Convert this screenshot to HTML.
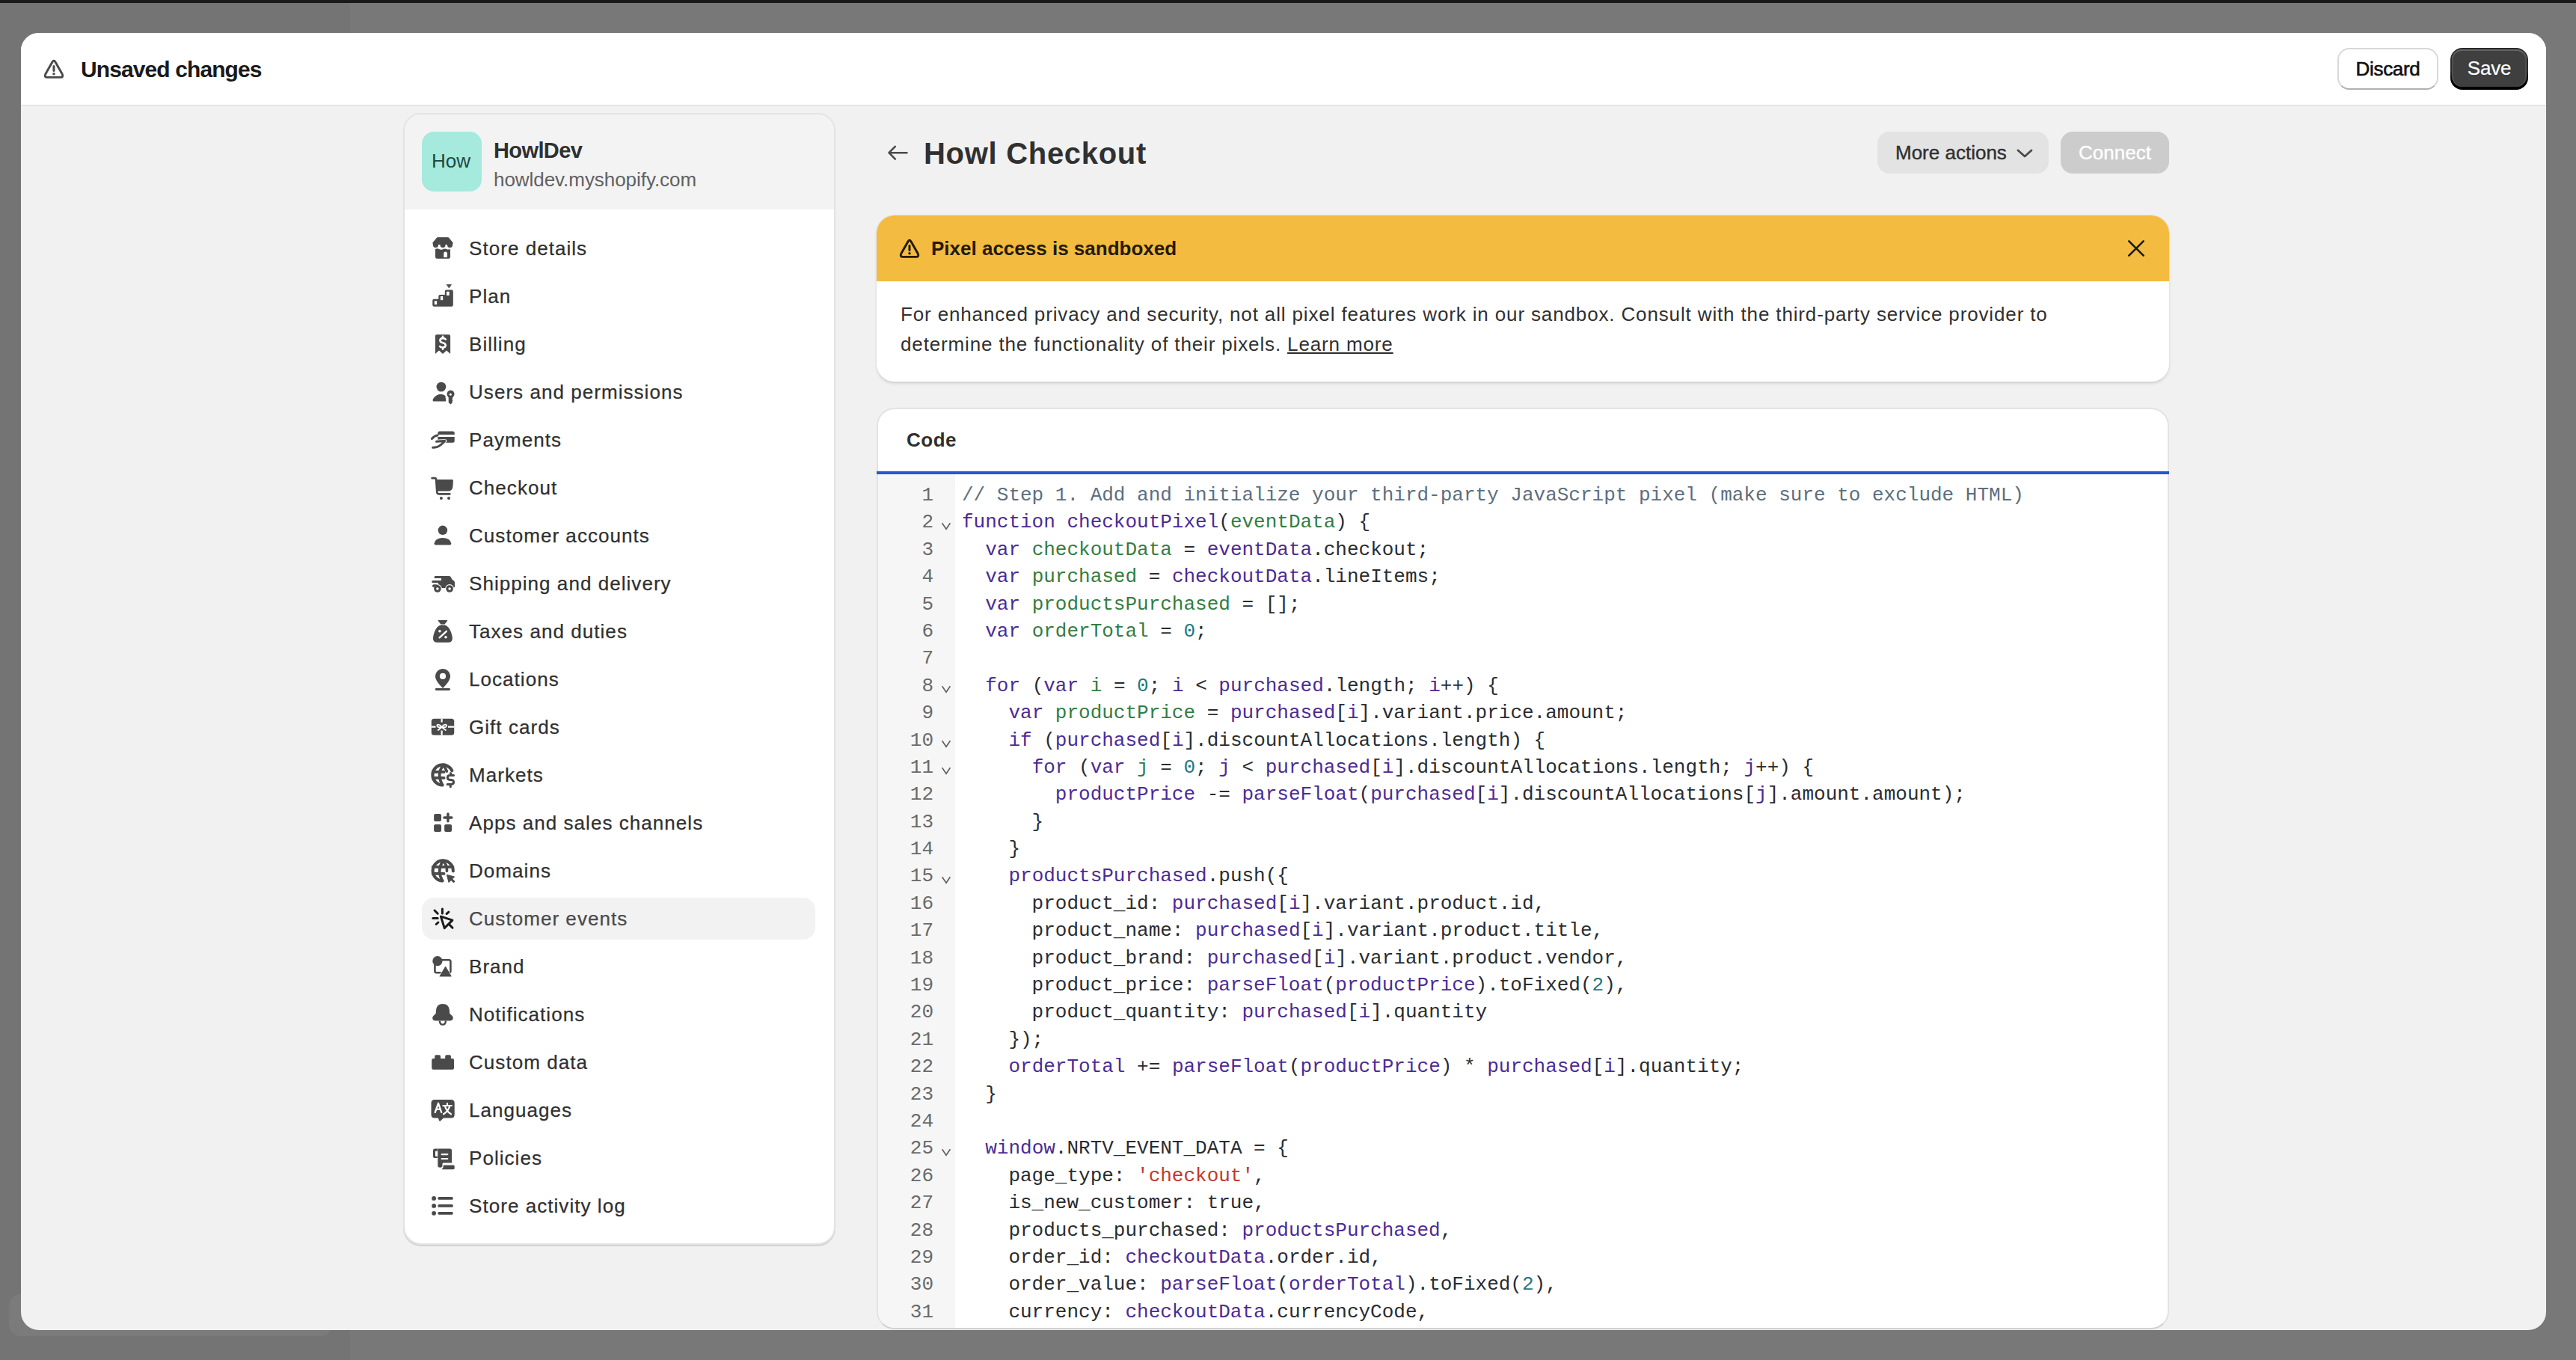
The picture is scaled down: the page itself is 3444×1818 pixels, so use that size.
<!DOCTYPE html>
<html>
<head>
<meta charset="utf-8">
<style>
*{box-sizing:border-box;margin:0;padding:0}
html,body{width:3444px;height:1818px;overflow:hidden}
body{position:relative;background:#787878;font-family:"Liberation Sans",sans-serif;color:#303030}
.abs{position:absolute}
#topbar{left:0;top:0;width:3444px;height:4px;background:#1a1a1a}
#bdl{left:0;top:4px;width:468px;height:1814px;background:#747474}
#ghost{left:12px;top:1730px;width:432px;height:56px;border-radius:16px;background:#7b7b7b}
#modal{left:28px;top:44px;width:3376px;height:1734px;border-radius:24px;background:#f1f1f1;overflow:hidden}
#mhead{left:0;top:0;width:3376px;height:97px;background:#fff;border-bottom:1px solid #e0e0e0;box-shadow:0 1px 0 #eaeaea}
.t{position:absolute;white-space:nowrap}
.btn{position:absolute;border-radius:16px;text-align:center;font-size:26px}
/* sidebar */
#side{left:511px;top:107px;width:578px;height:1513px;border:2px solid #e3e3e3;border-radius:24px;background:#fff;overflow:hidden;box-shadow:0 2px 0 #d4d4d4}
#shead{left:0;top:0;width:100%;height:127px;background:#f3f3f3}
.item{position:absolute;left:23px;width:526px;height:56px;border-radius:16px}
.item .lbl{position:absolute;left:63px;top:0;line-height:56px;font-size:26px;color:#303030;white-space:nowrap;letter-spacing:1.05px;-webkit-text-stroke:0.25px currentColor}
.item svg{position:absolute;left:8px;top:7px;width:40px;height:40px;overflow:visible}
.sel{background:#f2f2f2}
/* main */
#banner{left:1144px;top:244px;width:1728px;height:222px;border-radius:24px;background:#fff;overflow:hidden;box-shadow:0 0 0 1px #e3e3e3, 0 2px 0 #d2d2d2, 0 3px 4px rgba(0,0,0,0.10)}
#bhead{left:0;top:0;width:100%;height:88px;background:#f4bb41}
#card{left:1144px;top:501px;width:1728px;height:1232px;border-radius:24px;background:#fff;overflow:hidden;border:2px solid #e3e3e3;border-bottom-color:#d0d0d0}
#gutter{left:0;top:87px;width:103px;height:1200px;background:#f6f6f6}
.gn{height:36.4px;line-height:36.4px;text-align:right;position:relative;width:74px;color:#6a6a6a}
.fd{position:absolute;left:84px;top:17.5px}
.ln{height:36.4px;line-height:36.4px;white-space:pre}
.mono{font-family:"Liberation Mono",monospace;font-size:26px}
.k,.v{color:#4c2b94}
.d{color:#337d40}
.n{color:#23797d}
.s{color:#c4372c}
.c{color:#5d6e7e}
#code{color:#292c30}
</style>
</head>
<body>
<div id="topbar" class="abs"></div>
<div id="bdl" class="abs"></div>
<div id="ghost" class="abs"></div>

<div id="modal" class="abs">
  <div id="mhead" class="abs">
    <svg class="abs" style="left:29px;top:33px" width="30" height="30" viewBox="0 0 30 30">
      <path d="M12.9 6 Q15 2.6 17.1 6 L26.2 22 Q28.2 26.4 23.8 26.4 H6.2 Q1.8 26.4 3.8 22 Z" fill="none" stroke="#4a4a4a" stroke-width="2.9" stroke-linejoin="round"/>
      <line x1="15" y1="11.6" x2="15" y2="17.4" stroke="#4a4a4a" stroke-width="3" stroke-linecap="round"/>
      <circle cx="15" cy="21.7" r="1.75" fill="#4a4a4a"/>
    </svg>
    <div class="t" style="left:80px;top:29px;font-size:30px;line-height:40px;font-weight:bold;color:#1a1a1a;letter-spacing:-0.9px">Unsaved changes</div>
    <div class="btn" style="left:3097px;top:20px;width:135px;height:56px;background:#fff;border:2px solid #d8d8d8;border-bottom-color:#b0b0b0;line-height:52px;color:#111;letter-spacing:-0.3px;-webkit-text-stroke:0.6px #111">Discard</div>
    <div class="btn" style="left:3248px;top:20px;width:104px;height:56px;background:linear-gradient(#2b2b2b 55%,#000 80%)"><div class="abs" style="left:2px;top:2px;right:2px;bottom:4px;border-radius:14px;background:#3f3f3f;box-shadow:inset 0 2px 0 #646464, inset 2px 0 0 #4f4f4f, inset -2px 0 0 #4f4f4f"></div><div class="abs" style="left:0;top:0;width:104px;line-height:54px;color:#fff;letter-spacing:-0.2px;-webkit-text-stroke:0.2px #fff">Save</div></div>
  </div>

  <!-- sidebar -->
  <div id="side" class="abs">
    <div id="shead" class="abs">
      <div class="abs" style="left:23px;top:23px;width:80px;height:80px;border-radius:16px;background:#a6e9dd"></div>
      <div class="t" style="left:36px;top:42px;font-size:26px;line-height:40px;color:#1d4a42;letter-spacing:0px">How</div>
      <div class="t" style="left:119px;top:28px;font-size:29px;line-height:40px;font-weight:bold;color:#303030;letter-spacing:-0.6px">HowlDev</div>
      <div class="t" style="left:119px;top:67px;font-size:26px;line-height:40px;color:#616161;letter-spacing:-0.05px">howldev.myshopify.com</div>
    </div>
    <div class="item" style="top:151px"><svg viewBox="0 0 40 40">
<path d="M12.5 6.7 H27.5 L33 13.2 V15.5 H7 V13.2 Z" fill="#4a4a4a" stroke="#4a4a4a" stroke-width="1" stroke-linejoin="round"/>
<circle cx="10.5" cy="16.6" r="3.5" fill="#4a4a4a"/><circle cx="20" cy="16.6" r="3.5" fill="#4a4a4a"/><circle cx="29.5" cy="16.6" r="3.5" fill="#4a4a4a"/>
<path d="M10 22 Q12.5 20.6 15 22 Q17.5 23.4 20 22.2 Q22.5 21 25 22 Q27.5 23.2 30 22 V32.5 Q30 34.8 27.7 34.8 H12.3 Q10 34.8 10 32.5 Z" fill="#4a4a4a"/>
<path d="M21.2 33 V27.9 A2.4 2.4 0 0 1 26 27.9 V33 Z" fill="#ffffff"/>
</svg><div class="lbl">Store details</div></div>
<div class="item" style="top:215px"><svg viewBox="0 0 40 40">
<path d="M25 5.3 H31.6 L28.3 10 Z" fill="#4a4a4a" stroke="#4a4a4a" stroke-width="0.6" stroke-linejoin="round"/>
<path d="M6.25 26.7 Q6.25 24.7 8.25 24.7 H14.3 V20.9 Q14.3 18.9 16.3 18.9 H22.8 V14.6 Q22.8 12.6 24.8 12.6 H31.8 Q33.8 12.6 33.8 14.6 V32.7 Q33.8 34.7 31.8 34.7 H8.25 Q6.25 34.7 6.25 32.7 Z" fill="#4a4a4a"/>
<rect x="8.8" y="27.3" width="3.3" height="4.8" fill="#ffffff"/><rect x="16.9" y="21" width="3.3" height="5.2" fill="#ffffff"/><rect x="25" y="14.8" width="3.7" height="5.2" fill="#ffffff"/>
</svg><div class="lbl">Plan</div></div>
<div class="item" style="top:279px"><svg viewBox="0 0 40 40">
<path d="M9.9 10.2 Q9.9 8.2 11.9 8.2 H28.1 Q30.1 8.2 30.1 10.2 V33.9 L25 29.6 L20 33.9 L15 29.6 L9.9 33.9 Z" fill="#4a4a4a"/>
<path d="M23.8 14.6 Q22.8 13.1 20 13.1 Q16.4 13.1 16.4 16.1 Q16.4 18.6 20 19.3 Q23.7 20.1 23.7 22.6 Q23.7 25.5 20 25.5 Q17.1 25.5 16.1 24 M20 10.9 V13 M20 25.5 V27.8" fill="none" stroke="#ffffff" stroke-width="2.6" stroke-linecap="round"/>
</svg><div class="lbl">Billing</div></div>
<div class="item" style="top:343px"><svg viewBox="0 0 40 40">
<circle cx="17.9" cy="14.1" r="6.4" fill="#4a4a4a"/>
<path d="M6.6 32.3 Q6.4 31 7.5 29.6 Q11 24 17.5 24 Q21.3 24 23.6 26.2 V29 Q24.2 29.6 24.2 31 V33.6 H8 Q6.8 33.6 6.6 32.3 Z" fill="#4a4a4a"/>
<circle cx="30.5" cy="23.8" r="5" fill="#4a4a4a"/><circle cx="30.3" cy="24.2" r="1.5" fill="#ffffff"/>
<path d="M27.7 27 H33.2 V29.5 L32.2 30.5 L33.2 31.5 V33 L32.2 34 L33 35.2 L30.3 37.6 L27.7 35 Z" fill="#4a4a4a"/>
</svg><div class="lbl">Users and permissions</div></div>
<div class="item" style="top:407px"><svg viewBox="0 0 40 40">
<path d="M15.8 9.6 H33.2 Q35.7 9.6 35.7 12.1 V14 H13.3 V12.1 Q13.3 9.6 15.8 9.6 Z M13.3 17 H35.7 V22.2 Q35.7 24.7 33.2 24.7 H15.8 Q13.3 24.7 13.3 22.2 Z" fill="#4a4a4a"/>
<path d="M11.2 23.1 Q17 22.1 23.2 22.5" fill="none" stroke="#ffffff" stroke-width="4.4" stroke-linecap="round"/>
<path d="M5.4 19.6 Q9 15.4 12.9 15.1" fill="none" stroke="#4a4a4a" stroke-width="3" stroke-linecap="round"/>
<path d="M11.5 23.2 Q17 22.3 22.8 22.4 Q17.5 28.6 12.5 30.4 Q9.5 31.3 6.7 31.2" fill="none" stroke="#4a4a4a" stroke-width="3" stroke-linecap="round" stroke-linejoin="round"/>
</svg><div class="lbl">Payments</div></div>
<div class="item" style="top:471px"><svg viewBox="0 0 40 40">
<path d="M5.6 8.2 H9.3 Q10.9 8.2 11.1 10 L12.3 27 Q12.5 29.3 14.5 29.3 H29.3" fill="none" stroke="#4a4a4a" stroke-width="2.7" stroke-linecap="round" stroke-linejoin="round"/>
<path d="M10.9 10 H32.6 Q34 10 33.9 11.5 L33.4 19.5 Q32.9 25.5 27 25.5 H12 Z" fill="#4a4a4a"/>
<circle cx="17.9" cy="35" r="2" fill="#4a4a4a"/><circle cx="28" cy="35" r="2" fill="#4a4a4a"/>
</svg><div class="lbl">Checkout</div></div>
<div class="item" style="top:535px"><svg viewBox="0 0 40 40">
<circle cx="19.9" cy="13.8" r="6.25" fill="#4a4a4a"/>
<path d="M8.5 31.4 Q9 28 12 26 Q15.5 24 19.9 24 Q24.3 24 27.8 26 Q30.8 28 31.3 31.4 Q31.5 33.5 29.4 33.5 H10.4 Q8.3 33.5 8.5 31.4 Z" fill="#4a4a4a"/>
</svg><div class="lbl">Customer accounts</div></div>
<div class="item" style="top:599px"><svg viewBox="0 0 40 40">
<path d="M10 11.1 H28.5 Q30.2 11.1 31 12.8 L32 15 Q32.6 16.3 34 16.8 Q36 17.6 36 20 V24.3 Q36 26.9 33.6 26.9 H9.5 Q6.3 26.9 6.3 24 Q6.3 22.5 8 22.5 H14 V20 H6.7 Q5.2 20 5.2 18.5 Q5.2 17 6.7 17 H18 V14.1 H10 Q8.5 14.1 8.5 12.6 Q8.5 11.1 10 11.1 Z" fill="#4a4a4a"/>
<circle cx="12.9" cy="28" r="5.9" fill="#ffffff"/><circle cx="29.1" cy="28" r="5.9" fill="#ffffff"/>
<circle cx="12.9" cy="28" r="4.8" fill="#4a4a4a"/><circle cx="29.1" cy="28" r="4.8" fill="#4a4a4a"/>
<circle cx="12.9" cy="28" r="1.8" fill="#ffffff"/><circle cx="29.1" cy="28" r="1.8" fill="#ffffff"/>
<path d="M7.6 24 H12.5" stroke="#4a4a4a" stroke-width="3" stroke-linecap="round"/>
</svg><div class="lbl">Shipping and delivery</div></div>
<div class="item" style="top:663px"><svg viewBox="0 0 40 40">
<path d="M14.3 6 H25.5 Q26.6 6 26 7 L22.5 11.5 H17.3 L13.8 7 Q13.2 6 14.3 6 Z" fill="#4a4a4a"/>
<path d="M17.5 12.4 H22.3 Q28 13.5 31 22 Q33 28 32.8 31 Q32.5 35.7 27.5 35.7 H12.3 Q7.3 35.7 7 31 Q6.8 28 8.8 22 Q11.8 13.5 17.5 12.4 Z" fill="#4a4a4a"/>
<path d="M15.6 29.4 L24.9 20.8" stroke="#ffffff" stroke-width="2.3" stroke-linecap="round"/>
<circle cx="15.9" cy="20.8" r="1.8" fill="#ffffff"/><circle cx="24" cy="28.7" r="1.8" fill="#ffffff"/>
</svg><div class="lbl">Taxes and duties</div></div>
<div class="item" style="top:727px"><svg viewBox="0 0 40 40">
<path d="M20 32.9 Q9.9 23.5 9.9 17.1 A10.1 10.1 0 0 1 30.1 17.1 Q30.1 23.5 20 32.9 Z" fill="#4a4a4a"/>
<circle cx="20" cy="16.9" r="4.1" fill="#ffffff"/>
<path d="M11.2 34.5 H28.6" stroke="#4a4a4a" stroke-width="2.8" stroke-linecap="round"/>
</svg><div class="lbl">Locations</div></div>
<div class="item" style="top:791px"><svg viewBox="0 0 40 40">
<rect x="4.8" y="9.7" width="30.4" height="22.1" rx="3.5" fill="#4a4a4a"/>
<path d="M18.6 9.7 V14.5 M18.6 25.5 V31.8 M4.8 20.7 H10.5 M27 20.7 H35.2" stroke="#ffffff" stroke-width="2.2"/>
<path d="M18.6 21 C15.5 16.5 11.5 16.8 12.6 19.8 C13.4 21.6 16 21.5 18.6 21 C21.5 16.5 25.8 16.8 24.8 19.8 C24 21.6 21.5 21.5 18.6 21 M18.6 21 L13.8 25 M18.6 21 L23.8 25" fill="none" stroke="#ffffff" stroke-width="1.9" stroke-linecap="round" stroke-linejoin="round"/>
</svg><div class="lbl">Gift cards</div></div>
<div class="item" style="top:855px"><svg viewBox="0 0 40 40">
<path d="M32.3 15.2 A13.6 13.6 0 1 0 19.6 34.5" fill="none" stroke="#4a4a4a" stroke-width="4.1" stroke-linecap="round"/>
<path d="M20.3 7.6 Q11.5 20.9 19.4 34.2 M20.3 7.6 Q23.6 11 25.3 16 M6.6 16.9 H21.6 M6.6 24.9 H21.6" fill="none" stroke="#4a4a4a" stroke-width="3.7" stroke-linecap="round"/>
<path d="M34.5 21.6 H29.6 Q26.3 21.6 26.3 24.5 Q26.3 27.3 29.6 27.5 H31.3 Q34.5 27.8 34.5 30.6 Q34.5 33.4 31.2 33.4 H26.1 M30.5 18.4 V21.6 M30.3 33.4 V36.8" fill="none" stroke="#4a4a4a" stroke-width="3" stroke-linecap="round" stroke-linejoin="round"/>
</svg><div class="lbl">Markets</div></div>
<div class="item" style="top:919px"><svg viewBox="0 0 40 40">
<rect x="8.1" y="9.1" width="9.9" height="9.9" rx="2" fill="#4a4a4a"/>
<rect x="8.1" y="23" width="9.9" height="9.9" rx="2" fill="#4a4a4a"/><rect x="22.1" y="23" width="9.9" height="9.9" rx="2" fill="#4a4a4a"/>
<path d="M26.9 9 V18.8 M22 13.9 H31.8" stroke="#4a4a4a" stroke-width="3.5" stroke-linecap="round"/>
</svg><div class="lbl">Apps and sales channels</div></div>
<div class="item" style="top:983px"><svg viewBox="0 0 40 40">
<path d="M19.6 34.5 A13.6 13.6 0 1 1 33.8 21.4" fill="none" stroke="#4a4a4a" stroke-width="4.1" stroke-linecap="round"/>
<path d="M20.3 7.6 Q11.5 20.9 19.4 34.2 M20.3 7.6 Q25.8 13 25.5 21.3 M6.6 15.8 H33.5 M6.6 24.9 H21.6" fill="none" stroke="#4a4a4a" stroke-width="3.7" stroke-linecap="round"/>
<path d="M25.4 26.4 L35.6 29 L28 36.6 Z" fill="#4a4a4a" stroke="#4a4a4a" stroke-width="1" stroke-linejoin="round"/>
<path d="M30.5 31.5 L34.6 35.3" stroke="#4a4a4a" stroke-width="3" stroke-linecap="round"/>
</svg><div class="lbl">Domains</div></div>
<div class="item sel" style="top:1047px"><svg viewBox="0 0 40 40">
<path d="M19.4 8 V14 M9 10 L13.2 14.2 M6.8 20.4 H13.2 M11.2 28.5 L13.9 26 M25.1 14.5 L27.9 12.2 M28.4 28.6 L33 33.3" fill="none" stroke="#1a1a1a" stroke-width="3" stroke-linecap="round"/>
<path d="M17.4 18.1 L32.9 23.1 L22.2 33.6 Z" fill="none" stroke="#1a1a1a" stroke-width="3" stroke-linejoin="round"/>
</svg><div class="lbl" style="color:#4a4a4a">Customer events</div></div>
<div class="item" style="top:1111px"><svg viewBox="0 0 40 40">
<rect x="9.4" y="12.3" width="21" height="16.9" rx="2.2" fill="none" stroke="#4a4a4a" stroke-width="2.6"/>
<circle cx="12.9" cy="13.7" r="6.6" fill="#4a4a4a"/>
<path d="M23.6 20.2 L32 34.5 H15.1 Z" fill="#4a4a4a" stroke="#ffffff" stroke-width="1.4" stroke-linejoin="round"/>
<path d="M23.6 21.5 L31 34 H16.2 Z" fill="#4a4a4a" stroke="#4a4a4a" stroke-width="1.2" stroke-linejoin="round"/>
</svg><div class="lbl">Brand</div></div>
<div class="item" style="top:1175px"><svg viewBox="0 0 40 40">
<path d="M19.9 6.9 Q28.5 6.9 29 16 L29.2 19.8 L32.8 23.3 Q34.2 24.8 33.6 27 Q33 29.4 30 29.4 H9.8 Q6.8 29.4 6.3 27 Q5.8 24.8 7.1 23.3 L10.7 19.8 L10.9 16 Q11.3 6.9 19.9 6.9 Z" fill="#4a4a4a"/>
<path d="M15.9 29.5 Q15.9 34.6 19.9 34.6 Q23.9 34.6 23.9 29.5" fill="none" stroke="#4a4a4a" stroke-width="2.4"/>
</svg><div class="lbl">Notifications</div></div>
<div class="item" style="top:1239px"><svg viewBox="0 0 40 40">
<rect x="5.2" y="16.1" width="29.8" height="14.7" rx="2" fill="#4a4a4a"/>
<rect x="9.2" y="11.3" width="7.8" height="6" rx="1.8" fill="#4a4a4a"/><rect x="23.2" y="11.3" width="7.7" height="6" rx="1.8" fill="#4a4a4a"/>
</svg><div class="lbl">Custom data</div></div>
<div class="item" style="top:1303px"><svg viewBox="0 0 40 40">
<path d="M9 6.9 H31.2 Q35.7 6.9 35.7 11.4 V27.1 Q35.7 31.6 31.2 31.6 H21 L16.8 35.4 Q15.6 36.2 15.1 35 L13.8 31.6 H9 Q4.5 31.6 4.5 27.1 V11.4 Q4.5 6.9 9 6.9 Z" fill="#4a4a4a"/>
<path d="M9.7 24 L14 11.8 L18.2 24 M11.3 19.9 H16.7" fill="none" stroke="#ffffff" stroke-width="2.3" stroke-linejoin="round" stroke-linecap="round"/>
<path d="M26 12 V14.4 M20.4 15 H31.8 M22.8 15 Q24.5 22.5 31 26.3 M29.3 15 Q27.5 22.5 21 26.3" fill="none" stroke="#ffffff" stroke-width="2.2" stroke-linecap="round"/>
</svg><div class="lbl">Languages</div></div>
<div class="item" style="top:1367px"><svg viewBox="0 0 40 40">
<path d="M9.5 8.4 H29.5 Q32 8.4 32 10.9 V27.5 H20.5 Q19.5 27.5 19.5 29 V31 Q19.5 33.8 16.4 33.8 Q13.3 33.8 13.3 31 V20.9 H9 Q7 20.9 7 18.9 V10.9 Q7 8.4 9.5 8.4 Z" fill="#4a4a4a"/>
<rect x="10" y="11.7" width="2.9" height="7" rx="0.8" fill="#ffffff"/>
<path d="M13.1 8.4 V20.9" stroke="#ffffff" stroke-width="0.5"/>
<path d="M18.6 16.1 H26.3 M18.6 22 H26.3" stroke="#ffffff" stroke-width="2.2" stroke-linecap="round"/>
<path d="M21 30.5 H34.2 Q35.7 30.5 35.7 32 V34.5 Q35.7 36.3 33.9 36.3 H18.4 Q21 34 21 30.5 Z" fill="#4a4a4a"/>
</svg><div class="lbl">Policies</div></div>
<div class="item" style="top:1431px"><svg viewBox="0 0 40 40">
<circle cx="8.1" cy="10.9" r="2.9" fill="#4a4a4a"/><circle cx="8.1" cy="20.9" r="2.9" fill="#4a4a4a"/><circle cx="8.1" cy="30.8" r="2.9" fill="#4a4a4a"/>
<path d="M15.1 10.9 H32 M15.1 20.9 H32 M15.1 30.8 H32" stroke="#4a4a4a" stroke-width="3.7" stroke-linecap="round"/>
</svg><div class="lbl">Store activity log</div></div>
  </div>

  <!-- main header -->
  <svg class="abs" style="left:1156px;top:146px" width="32" height="28" viewBox="0 0 32 28">
    <path d="M28.5 14.2 H4.6 M12.8 5.8 L4.5 14.2 L12.8 22.6" fill="none" stroke="#4a4a4a" stroke-width="2.6" stroke-linecap="round" stroke-linejoin="round"/>
  </svg>
  <div class="t" style="left:1207px;top:137px;font-size:40px;line-height:48px;font-weight:bold;color:#303030;letter-spacing:0.7px">Howl Checkout</div>
  <div class="btn" style="left:2482px;top:132px;width:229px;height:56px;background:#e3e3e3;line-height:56px"></div>
  <div class="t" style="left:2506px;top:132px;font-size:26px;line-height:56px;color:#303030;-webkit-text-stroke:0.4px #303030">More actions</div>
  <svg class="abs" style="left:2667px;top:154px" width="24" height="14" viewBox="0 0 24 14"><path d="M3 3 L12 11 L21 3" fill="none" stroke="#4a4a4a" stroke-width="2.8" stroke-linecap="round" stroke-linejoin="round"/></svg>
  <div class="btn" style="left:2727px;top:132px;width:145px;height:56px;background:#cccccc;line-height:56px;color:#fff;-webkit-text-stroke:0.4px #fff">Connect</div>

  <!-- banner -->
  <div id="banner" class="abs">
    <div id="bhead" class="abs">
      <svg class="abs" style="left:29px;top:29px" width="30" height="30" viewBox="0 0 30 30">
        <path d="M12.9 6 Q15 2.6 17.1 6 L26.2 22 Q28.2 26.4 23.8 26.4 H6.2 Q1.8 26.4 3.8 22 Z" fill="none" stroke="#251a00" stroke-width="2.9" stroke-linejoin="round"/>
      <line x1="15" y1="11.6" x2="15" y2="17.4" stroke="#251a00" stroke-width="3" stroke-linecap="round"/>
      <circle cx="15" cy="21.7" r="1.75" fill="#251a00"/>
      </svg>
      <div class="t" style="left:73px;top:24px;font-size:26px;line-height:40px;font-weight:bold;color:#251a00">Pixel access is sandboxed</div>
      <svg class="abs" style="left:1669px;top:29px" width="30" height="30" viewBox="0 0 30 30"><path d="M5.3 5.3 L24.7 24.7 M24.7 5.3 L5.3 24.7" stroke="#1a1a1a" stroke-width="2.6" stroke-linecap="round"/></svg>
    </div>
    <div class="t" style="left:32px;top:113px;font-size:26px;line-height:39.5px;color:#303030;letter-spacing:0.86px;white-space:normal;width:1680px">For enhanced privacy and security, not all pixel features work in our sandbox. Consult with the third-party service provider to<br>determine the functionality of their pixels. <span style="text-decoration:underline">Learn more</span></div>
  </div>

  <!-- code card -->
  <div id="card" class="abs">
    <div class="t" style="left:38px;top:21px;font-size:26px;line-height:40px;font-weight:bold;color:#303030;letter-spacing:0.5px">Code</div>
    <div id="gutter" class="abs"></div>
    
    <div class="abs mono" style="left:0;top:97px">
<div class="gn">1</div>
<div class="gn">2<svg class="fd" width="14" height="12" viewBox="0 0 14 12"><path d="M1.6 1.2 L7 9.3 L12.4 1.2" fill="none" stroke="#5e5e5e" stroke-width="1.6"/></svg></div>
<div class="gn">3</div>
<div class="gn">4</div>
<div class="gn">5</div>
<div class="gn">6</div>
<div class="gn">7</div>
<div class="gn">8<svg class="fd" width="14" height="12" viewBox="0 0 14 12"><path d="M1.6 1.2 L7 9.3 L12.4 1.2" fill="none" stroke="#5e5e5e" stroke-width="1.6"/></svg></div>
<div class="gn">9</div>
<div class="gn">10<svg class="fd" width="14" height="12" viewBox="0 0 14 12"><path d="M1.6 1.2 L7 9.3 L12.4 1.2" fill="none" stroke="#5e5e5e" stroke-width="1.6"/></svg></div>
<div class="gn">11<svg class="fd" width="14" height="12" viewBox="0 0 14 12"><path d="M1.6 1.2 L7 9.3 L12.4 1.2" fill="none" stroke="#5e5e5e" stroke-width="1.6"/></svg></div>
<div class="gn">12</div>
<div class="gn">13</div>
<div class="gn">14</div>
<div class="gn">15<svg class="fd" width="14" height="12" viewBox="0 0 14 12"><path d="M1.6 1.2 L7 9.3 L12.4 1.2" fill="none" stroke="#5e5e5e" stroke-width="1.6"/></svg></div>
<div class="gn">16</div>
<div class="gn">17</div>
<div class="gn">18</div>
<div class="gn">19</div>
<div class="gn">20</div>
<div class="gn">21</div>
<div class="gn">22</div>
<div class="gn">23</div>
<div class="gn">24</div>
<div class="gn">25<svg class="fd" width="14" height="12" viewBox="0 0 14 12"><path d="M1.6 1.2 L7 9.3 L12.4 1.2" fill="none" stroke="#5e5e5e" stroke-width="1.6"/></svg></div>
<div class="gn">26</div>
<div class="gn">27</div>
<div class="gn">28</div>
<div class="gn">29</div>
<div class="gn">30</div>
<div class="gn">31</div>
    </div>
    <div id="code" class="abs mono" style="left:112px;top:97px">
<div class="ln"><span class="c">// Step 1. Add and initialize your third-party JavaScript pixel (make sure to exclude HTML)</span></div>
<div class="ln"><span class="k">function</span> <span class="v">checkoutPixel</span>(<span class="d">eventData</span>) {</div>
<div class="ln">  <span class="k">var</span> <span class="d">checkoutData</span> = <span class="v">eventData</span>.checkout;</div>
<div class="ln">  <span class="k">var</span> <span class="d">purchased</span> = <span class="v">checkoutData</span>.lineItems;</div>
<div class="ln">  <span class="k">var</span> <span class="d">productsPurchased</span> = [];</div>
<div class="ln">  <span class="k">var</span> <span class="d">orderTotal</span> = <span class="n">0</span>;</div>
<div class="ln"></div>
<div class="ln">  <span class="k">for</span> (<span class="k">var</span> <span class="d">i</span> = <span class="n">0</span>; <span class="v">i</span> &lt; <span class="v">purchased</span>.length; <span class="v">i</span>++) {</div>
<div class="ln">    <span class="k">var</span> <span class="d">productPrice</span> = <span class="v">purchased</span>[<span class="v">i</span>].variant.price.amount;</div>
<div class="ln">    <span class="k">if</span> (<span class="v">purchased</span>[<span class="v">i</span>].discountAllocations.length) {</div>
<div class="ln">      <span class="k">for</span> (<span class="k">var</span> <span class="d">j</span> = <span class="n">0</span>; <span class="v">j</span> &lt; <span class="v">purchased</span>[<span class="v">i</span>].discountAllocations.length; <span class="v">j</span>++) {</div>
<div class="ln">        <span class="v">productPrice</span> -= <span class="v">parseFloat</span>(<span class="v">purchased</span>[<span class="v">i</span>].discountAllocations[<span class="v">j</span>].amount.amount);</div>
<div class="ln">      }</div>
<div class="ln">    }</div>
<div class="ln">    <span class="v">productsPurchased</span>.push({</div>
<div class="ln">      product_id: <span class="v">purchased</span>[<span class="v">i</span>].variant.product.id,</div>
<div class="ln">      product_name: <span class="v">purchased</span>[<span class="v">i</span>].variant.product.title,</div>
<div class="ln">      product_brand: <span class="v">purchased</span>[<span class="v">i</span>].variant.product.vendor,</div>
<div class="ln">      product_price: <span class="v">parseFloat</span>(<span class="v">productPrice</span>).toFixed(<span class="n">2</span>),</div>
<div class="ln">      product_quantity: <span class="v">purchased</span>[<span class="v">i</span>].quantity</div>
<div class="ln">    });</div>
<div class="ln">    <span class="v">orderTotal</span> += <span class="v">parseFloat</span>(<span class="v">productPrice</span>) * <span class="v">purchased</span>[<span class="v">i</span>].quantity;</div>
<div class="ln">  }</div>
<div class="ln"></div>
<div class="ln">  <span class="v">window</span>.NRTV_EVENT_DATA = {</div>
<div class="ln">    page_type: <span class="s">&#x27;checkout&#x27;</span>,</div>
<div class="ln">    is_new_customer: true,</div>
<div class="ln">    products_purchased: <span class="v">productsPurchased</span>,</div>
<div class="ln">    order_id: <span class="v">checkoutData</span>.order.id,</div>
<div class="ln">    order_value: <span class="v">parseFloat</span>(<span class="v">orderTotal</span>).toFixed(<span class="n">2</span>),</div>
<div class="ln">    currency: <span class="v">checkoutData</span>.currencyCode,</div>
    </div>
  </div>
<div class="abs" style="left:1144px;top:586px;width:1728px;height:4px;background:#2458d2"></div>
</div>
</body>
</html>
